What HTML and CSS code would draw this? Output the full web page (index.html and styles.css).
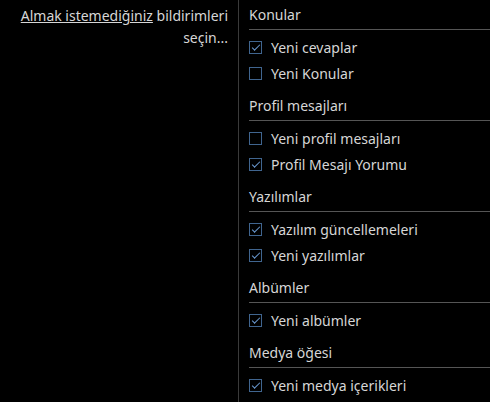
FILE: index.html
```html
<html lang="tr">
<head>
  <meta charset="UTF-8" />
  <title>Bildirim tercihleri</title>
  <link rel="stylesheet" href="styles.css">
</head>
<body>
  <div class="prefs">
    <div class="prefs-hint">
      <a href="#">Almak istemediğiniz</a> bildirimleri seçin...
    </div>

    <div class="prefs-groups">
      <div class="group">
        <div class="group-title">Konular</div>
        <ul class="group-list">
          <li><span class="box checked"></span>Yeni cevaplar</li>
          <li><span class="box"></span>Yeni Konular</li>
        </ul>
      </div>

      <div class="group">
        <div class="group-title">Profil mesajları</div>
        <ul class="group-list">
          <li><span class="box"></span>Yeni profil mesajları</li>
          <li><span class="box checked"></span>Profil Mesajı Yorumu</li>
        </ul>
      </div>

      <div class="group">
        <div class="group-title">Yazılımlar</div>
        <ul class="group-list">
          <li><span class="box checked"></span>Yazılım güncellemeleri</li>
          <li><span class="box checked"></span>Yeni yazılımlar</li>
        </ul>
      </div>

      <div class="group">
        <div class="group-title">Albümler</div>
        <ul class="group-list">
          <li><span class="box checked"></span>Yeni albümler</li>
        </ul>
      </div>

      <div class="group">
        <div class="group-title">Medya öğesi</div>
        <ul class="group-list">
          <li><span class="box checked"></span>Yeni medya içerikleri</li>
        </ul>
      </div>
    </div>
  </div>
</body>
</html>
```

FILE: styles.css
```css
* { box-sizing: border-box; }

body {
  margin: 0;
  background: #000;
  color: #d6d6d6;
  font-family: 'Noto Sans', sans-serif;
  font-size: 14px;
  overflow: hidden;
}

.prefs {
  display: flex;
  height: 100vh;
}

.prefs-hint {
  width: 239px;
  flex-shrink: 0;
  padding: 5px 10px 0 20px;
  text-align: right;
  line-height: 22px;
  border-right: 1px solid #3a3a3a;
}

.prefs-hint a {
  color: #d6d6d6;
  text-decoration: underline;
}

.prefs-groups {
  flex: 1;
  padding: 5px 0 0 10px;
}

.group + .group {
  margin-top: 10px;
}

.group-title {
  line-height: 20px;
  padding-bottom: 4px;
  border-bottom: 1px solid #555;
}

.group-list {
  list-style: none;
  margin: 0;
  padding: 4px 0 0;
}

.group-list li {
  display: flex;
  align-items: center;
  height: 26px;
}

.box {
  width: 13px;
  height: 13px;
  margin-right: 9px;
  border: 1px solid #40658f;
  position: relative;
}

.box.checked::after {
  content: '';
  position: absolute;
  left: 2px;
  top: 1px;
  width: 7px;
  height: 3px;
  border-left: 1.5px solid #6c9cd4;
  border-bottom: 1.5px solid #6c9cd4;
  transform: translate(0, 1.5px) rotate(-45deg);
}
```
